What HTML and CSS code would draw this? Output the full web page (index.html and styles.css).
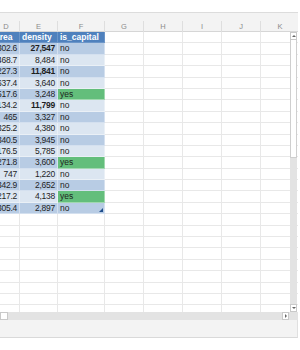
FILE: index.html
```html
<!DOCTYPE html>
<html>
<head>
<meta charset="utf-8">
<link rel="stylesheet" href="styles.css">
</head>
<body>
<div class="app">
  <div class="formula"></div>
  <div class="gap"></div>
  <div class="sheet">
    <div class="grid">
      <div class="row cols">
        <div class="ch">D</div><div class="ch">E</div><div class="ch">F</div><div class="ch">G</div><div class="ch">H</div><div class="ch">I</div><div class="ch">J</div><div class="ch">K</div>
      </div>
      <div class="row"><div class="c th">area</div><div class="c th">density</div><div class="c th">is_capital</div><div class="c blank"></div></div>
      <div class="row dk"><div class="c t n">302.6</div><div class="c t n b">27,547</div><div class="c t s">no</div><div class="c blank"></div></div>
      <div class="row lt"><div class="c t n">468.7</div><div class="c t n">8,484</div><div class="c t s">no</div><div class="c blank"></div></div>
      <div class="row dk"><div class="c t n">227.3</div><div class="c t n b">11,841</div><div class="c t s">no</div><div class="c blank"></div></div>
      <div class="row lt"><div class="c t n">637.4</div><div class="c t n">3,640</div><div class="c t s">no</div><div class="c blank"></div></div>
      <div class="row dk"><div class="c t n">517.6</div><div class="c t n">3,248</div><div class="c t s yes">yes</div><div class="c blank"></div></div>
      <div class="row lt"><div class="c t n">134.2</div><div class="c t n b">11,799</div><div class="c t s">no</div><div class="c blank"></div></div>
      <div class="row dk"><div class="c t n">465</div><div class="c t n">3,327</div><div class="c t s">no</div><div class="c blank"></div></div>
      <div class="row lt"><div class="c t n">325.2</div><div class="c t n">4,380</div><div class="c t s">no</div><div class="c blank"></div></div>
      <div class="row dk"><div class="c t n">340.5</div><div class="c t n">3,945</div><div class="c t s">no</div><div class="c blank"></div></div>
      <div class="row lt"><div class="c t n">176.5</div><div class="c t n">5,785</div><div class="c t s">no</div><div class="c blank"></div></div>
      <div class="row dk"><div class="c t n">271.8</div><div class="c t n">3,600</div><div class="c t s yes">yes</div><div class="c blank"></div></div>
      <div class="row lt"><div class="c t n">747</div><div class="c t n">1,220</div><div class="c t s">no</div><div class="c blank"></div></div>
      <div class="row dk"><div class="c t n">342.9</div><div class="c t n">2,652</div><div class="c t s">no</div><div class="c blank"></div></div>
      <div class="row lt"><div class="c t n">217.2</div><div class="c t n">4,138</div><div class="c t s yes">yes</div><div class="c blank"></div></div>
      <div class="row dk"><div class="c t n">305.4</div><div class="c t n">2,897</div><div class="c t s last">no</div><div class="c blank"></div></div>
      <div class="row"><div class="c"></div><div class="c"></div><div class="c"></div><div class="c blank"></div></div>
      <div class="row"><div class="c"></div><div class="c"></div><div class="c"></div><div class="c blank"></div></div>
      <div class="row"><div class="c"></div><div class="c"></div><div class="c"></div><div class="c blank"></div></div>
      <div class="row"><div class="c"></div><div class="c"></div><div class="c"></div><div class="c blank"></div></div>
      <div class="row"><div class="c"></div><div class="c"></div><div class="c"></div><div class="c blank"></div></div>
      <div class="row"><div class="c"></div><div class="c"></div><div class="c"></div><div class="c blank"></div></div>
      <div class="row"><div class="c"></div><div class="c"></div><div class="c"></div><div class="c blank"></div></div>
      <div class="row"><div class="c"></div><div class="c"></div><div class="c"></div><div class="c blank"></div></div>
      <div class="row"><div class="c"></div><div class="c"></div><div class="c"></div><div class="c blank"></div></div>
    </div>
    <div class="vscroll">
      <div class="vbtn"><span class="arr up"></span></div>
      <div class="vthumb"></div>
      <div class="vspace"></div>
      <div class="vbtn"><span class="arr down"></span></div>
    </div>
  </div>
  <div class="hscroll">
    <div class="hthumb"></div>
    <div class="hspace"></div>
    <div class="hbtn"><span class="arr right"></span></div>
    <div class="hcorner"></div>
  </div>
  <div class="status"></div>
</div>
</body>
</html>
```
FILE: styles.css
```css
* { box-sizing: border-box; }
body {
  margin: 0;
  background: #fff;
  font-family: "Liberation Sans", Arial, sans-serif;
}
.app { width: 298px; }
.formula {
  height: 13px;
  border-bottom: 1px solid #dcdcdc;
}
.gap {
  height: 8px;
  background: #f3f3f3;
}
.sheet {
  position: relative;
  height: 291px;
  overflow: hidden;
  background: #fff;
}
.grid { margin-left: -7px; width: 307px; }
.row {
  display: grid;
  grid-template-columns: 27px 38px 47px 195px;
  height: 11.4px;
  font-size: 8.5px;
  line-height: 10.4px;
  color: #1e1e1e;
}
.row.cols {
  grid-template-columns: 27px 38px 47px 39px 39px 39px 39px 39px;
  height: 11px;
  background: #f3f3f3;
  border-bottom: 1px solid #d6d6d6;
  color: #8c8c8c;
  font-size: 7.5px;
  line-height: 10px;
}
.ch {
  text-align: center;
  border-right: 1px solid #dedede;
  padding-top: 1px;
}
.c {
  border-right: 1px solid #e8e8e8;
  border-bottom: 1px solid #e8e8e8;
  white-space: nowrap;
  overflow: hidden;
}
.blank {
  border-right: none;
  background: repeating-linear-gradient(to right, transparent 0 38px, #e8e8e8 38px 39px);
}
.th {
  background: #4f81bd;
  color: #fff;
  font-weight: bold;
  padding-left: 2px;
  border-color: #6b95c8;
}
.t { border-color: rgba(255, 255, 255, 0.4); }
.dk .t { background: #b8cce4; }
.lt .t { background: #dce6f1; }
.n { text-align: right; padding-right: 2px; letter-spacing: -0.25px; }
.s { padding-left: 2px; }
.b { font-weight: bold; }
.t.yes { background: #63be7b; }
.last { position: relative; }
.last::after {
  content: "";
  position: absolute;
  right: 1px;
  bottom: 1px;
  border-style: solid;
  border-width: 0 0 4px 4px;
  border-color: transparent transparent #1f4e8c transparent;
}
.vscroll {
  position: absolute;
  top: 11px;
  right: 1px;
  bottom: 0;
  width: 7px;
  background: #e3e3e3;
  display: flex;
  flex-direction: column;
}
.vbtn, .hbtn {
  background: #fff;
  border: 1px solid #c9c9c9;
  display: flex;
  align-items: center;
  justify-content: center;
}
.vbtn { height: 8px; }
.vthumb {
  height: 118px;
  background: #fff;
  border: 1px solid #cfcfcf;
  border-top: none;
}
.vspace { flex: 1; }
.arr { width: 0; height: 0; border-style: solid; }
.arr.up { border-width: 0 2px 2px 2px; border-color: transparent transparent #666 transparent; }
.arr.down { border-width: 2px 2px 0 2px; border-color: #666 transparent transparent transparent; }
.arr.right { border-width: 2px 0 2px 2px; border-color: transparent transparent transparent #666; }
.hscroll {
  height: 8px;
  background: #e3e3e3;
  display: flex;
}
.hthumb {
  width: 8px;
  background: #fff;
  border: 1px solid #c9c9c9;
}
.hspace { flex: 1; }
.hbtn { width: 7px; }
.hcorner { width: 9px; }
.status {
  height: 18px;
  background: #f3f3f3;
  border-bottom: 1px solid #d9d9d9;
  border-right: 1px solid #e0e0e0;
}
```
